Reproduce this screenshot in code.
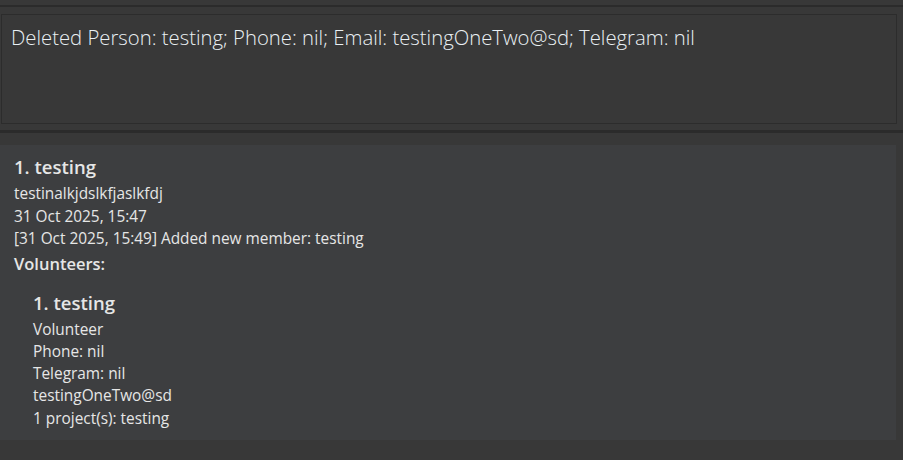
export default function App() {
  const font = { fontFamily: '"Open Sans", "Noto Sans", sans-serif' };
  return (
    <div className="h-[460px] w-[903px] overflow-hidden bg-[#383838]" style={font}>
      <div className="h-[5px]" />
      <div className="h-[2px] bg-[#2b2b2b]" />
      <div className="h-[7px]" />
      <div className="ml-[1px] mr-[6px] h-[110px] border border-[#2c2c2c] bg-[#383838] px-[9px] pt-[8px]">
        <p className="text-[20.3px] font-light leading-[28px] text-[#eaf0f4]">
          Deleted Person: testing; Phone: nil; Email: testingOneTwo@sd; Telegram: nil
        </p>
      </div>
      <div className="h-[6px]" />
      <div className="h-[3px] bg-[#2b2b2b]" />
      <div className="h-[12px]" />
      <div className="mr-[7px] h-[295px] bg-[#3d3e40] pl-[14px] pt-[9px] text-[#e6e6e6]">
        <h2 className="text-[18.5px] font-semibold leading-[26px]">1. testing</h2>
        <div className="pt-[3px] text-[15.4px] leading-[22.5px]">
          <p>testinalkjdslkfjaslkfdj</p>
          <p>31 Oct 2025, 15:47</p>
          <p>[31 Oct 2025, 15:49] Added new member: testing</p>
        </div>
        <p className="text-[16.5px] font-semibold leading-[26px]">Volunteers:</p>
        <div className="pl-[19px] pt-[13px]">
          <h3 className="text-[18.5px] font-semibold leading-[26px]">1. testing</h3>
          <div className="pt-[3px] text-[15.4px] leading-[22.25px]">
            <p>Volunteer</p>
            <p>Phone: nil</p>
            <p>Telegram: nil</p>
            <p>testingOneTwo@sd</p>
            <p>1 project(s): testing</p>
          </div>
        </div>
      </div>
    </div>
  );
}
